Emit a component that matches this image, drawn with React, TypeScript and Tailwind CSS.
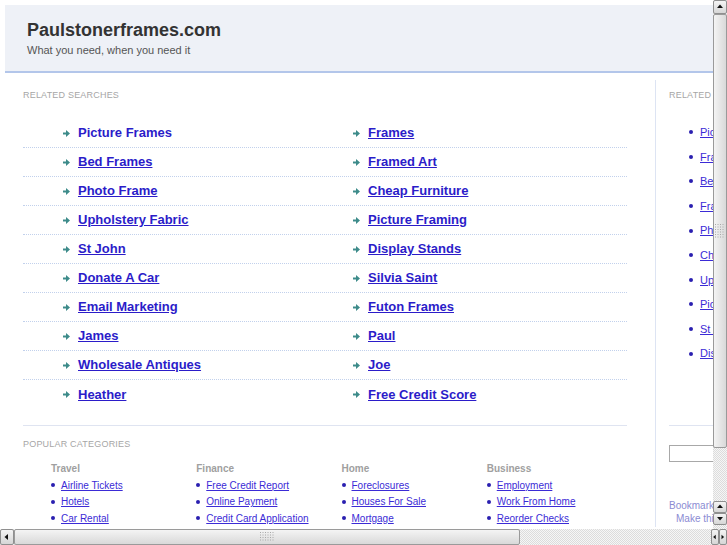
import React from "react";

const leftLinks = ["Picture Frames","Bed Frames","Photo Frame","Upholstery Fabric","St John","Donate A Car","Email Marketing","James","Wholesale Antiques","Heather"];
const rightLinks = ["Frames","Framed Art","Cheap Furniture","Picture Framing","Display Stands","Silvia Saint","Futon Frames","Paul","Joe","Free Credit Score"];
const sideLinks = ["Picture Frames","Frames","Bed Frames","Framed Art","Photo Frame","Cheap Furniture","Upholstery Fabric","Picture Framing","St John","Display Stands"];
const cats: { title: string; links: string[] }[] = [
  { title: "Travel", links: ["Airline Tickets", "Hotels", "Car Rental"] },
  { title: "Finance", links: ["Free Credit Report", "Online Payment", "Credit Card Application"] },
  { title: "Home", links: ["Foreclosures", "Houses For Sale", "Mortgage"] },
  { title: "Business", links: ["Employment", "Work From Home", "Reorder Checks"] },
];

function Arrow() {
  return (
    <svg width="7" height="7" viewBox="0 0 7 7" className="shrink-0">
      <path d="M0 2.5h3V0l4 3.5-4 3.5V4.5H0z" fill="#3d8b8a" />
    </svg>
  );
}

function Tri({ dir }: { dir: "up" | "down" | "left" | "right" }) {
  const d =
    dir === "up" ? "M1 5L4 1.5 7 5z" : dir === "down" ? "M1 2L4 5.5 7 2z" : dir === "left" ? "M5 1L1.5 4 5 7z" : "M2 1L5.5 4 2 7z";
  return (
    <svg width="8" height="8" viewBox="0 0 8 8">
      <path d={d} fill="#111" />
    </svg>
  );
}

function Grip({ vertical }: { vertical: boolean }) {
  const dots: React.ReactNode[] = [];
  const cols = vertical ? 4 : 6;
  const rows = vertical ? 6 : 4;
  for (let r = 0; r < rows; r++)
    for (let c = 0; c < cols; c++)
      dots.push(<rect key={r + "-" + c} x={c * 2.5} y={r * 2.5} width="1" height="1" fill="#a8a8a8" />);
  return (
    <svg width={cols * 2.5} height={rows * 2.5}>
      {dots}
    </svg>
  );
}

const track = "bg-[repeating-conic-gradient(#dcdcdc_0%_25%,#f6f6f6_0%_50%)] bg-[length:2px_2px]";
const btn = "flex items-center justify-center bg-linear-to-b from-[#f4f4f4] to-[#d6d6d6] border border-[#8f8f8f] rounded-[2px]";

export default function App() {
  return (
    <div className="w-[727px] h-[545px] flex flex-col overflow-hidden bg-white font-['Liberation_Sans',Arial,sans-serif]">
      <div className="flex h-[529px]">
        <div className="w-[713px] h-full overflow-hidden">
          <div className="w-[900px] pt-[5px] pl-[5px]">
            <div className="h-[68px] bg-[#eef1f7] border-b-2 border-[#b3c6ea] pl-[22px] pt-[14px]">
              <div className="text-[18px] leading-[22px] font-bold text-[#333]">Paulstonerframes.com</div>
              <div className="text-[11px] leading-[14px] mt-[2px] text-[#555]">What you need, when you need it</div>
            </div>
            <div className="flex">
              <div className="w-[650px] pl-[18px] pr-[28px] pt-[16px]">
                <div className="text-[9px] leading-[12px] tracking-[0.2px] text-[#a6a6a6]">RELATED SEARCHES</div>
                <div className="mt-[18px]">
                  {leftLinks.map((l, i) => (
                    <div
                      key={l}
                      className={
                        "flex h-[29px] items-center " +
                        (i < leftLinks.length - 1 ? "border-b border-dotted border-[#c2d1ec]" : "")
                      }
                    >
                      <div className="w-[290px] pl-[40px] flex items-center gap-[8px]">
                        <Arrow />
                        <a className={"text-[13px] font-bold text-[#2b1cc9] " + (i === 0 ? "" : "underline")}>{l}</a>
                      </div>
                      <div className="pl-[40px] flex items-center gap-[8px]">
                        <Arrow />
                        <a className="text-[13px] font-bold text-[#2b1cc9] underline">{rightLinks[i]}</a>
                      </div>
                    </div>
                  ))}
                </div>
                <div className="mt-[16px] border-t border-[#dfe4f1] pt-[12px]">
                  <div className="text-[9px] leading-[12px] tracking-[0.2px] text-[#a6a6a6]">POPULAR CATEGORIES</div>
                  <div className="grid grid-cols-4 w-[609px] pl-[28px] mt-[12px]">
                    {cats.map((c) => (
                      <div key={c.title}>
                        <div className="text-[10px] leading-[13px] font-bold text-[#a0a0a0]">{c.title}</div>
                        <div className="mt-[2px]">
                          {c.links.map((l) => (
                            <div key={l} className="flex items-center h-[16.5px]">
                              <span className="w-[4px] h-[4px] rounded-full bg-[#2a1fb0] mr-[6px]" />
                              <a className="text-[10px] text-[#3b2bd6] underline">{l}</a>
                            </div>
                          ))}
                        </div>
                      </div>
                    ))}
                  </div>
                </div>
              </div>
              <div className="mt-[7px] w-[200px] border-l border-[#dde4f3] pl-[13px] pt-[9px]">
                <div className="text-[9px] leading-[12px] tracking-[0.2px] text-[#a6a6a6]">RELATED SEARCHES</div>
                <div className="mt-[19px] pl-[20px]">
                  {sideLinks.map((l) => (
                    <div key={l} className="flex items-center h-[24.6px]">
                      <span className="w-[4px] h-[4px] rounded-full bg-[#2a1fb0] mr-[7px]" />
                      <a className="text-[11px] text-[#3b2bd6] underline">{l}</a>
                    </div>
                  ))}
                </div>
                <div className="mt-[59px] border-t border-[#dfe4f1] pt-[19px]">
                  <div className="h-[17px] w-[120px] border border-[#a8a8a8] bg-white" />
                </div>
                <div className="mt-[37px] text-[10px] leading-[13px] text-[#8b8bd3]">Bookmark this page</div>
                <div className="pl-[7px] text-[10px] leading-[13px] text-[#8b8bd3]">Make this your homepage</div>
              </div>
            </div>
          </div>
        </div>
        <div className={"w-[14px] h-full flex flex-col " + track}>
          <div className={btn + " h-[14px]"}>
            <Tri dir="up" />
          </div>
          <div className="h-[434px] flex items-center justify-center bg-linear-to-r from-[#f4f4f4] to-[#d9d9d9] border border-[#9a9a9a] rounded-[2px]">
            <Grip vertical />
          </div>
          <div className="flex-1" />
          <div className={btn + " h-[12px]"}>
            <Tri dir="up" />
          </div>
          <div className={btn + " h-[12px]"}>
            <Tri dir="down" />
          </div>
          <div className="h-[4px]" />
        </div>
      </div>
      <div className={"h-[16px] flex " + track}>
        <div className={btn + " w-[14px]"}>
          <Tri dir="left" />
        </div>
        <div className="w-[506px] flex items-center justify-center bg-linear-to-b from-[#f4f4f4] to-[#d9d9d9] border border-[#9a9a9a] rounded-[2px]">
          <Grip vertical={false} />
        </div>
        <div className="flex-1" />
        <div className={btn + " w-[8px]"}>
          <Tri dir="left" />
        </div>
        <div className={btn + " w-[8px]"}>
          <Tri dir="right" />
        </div>
      </div>
    </div>
  );
}
